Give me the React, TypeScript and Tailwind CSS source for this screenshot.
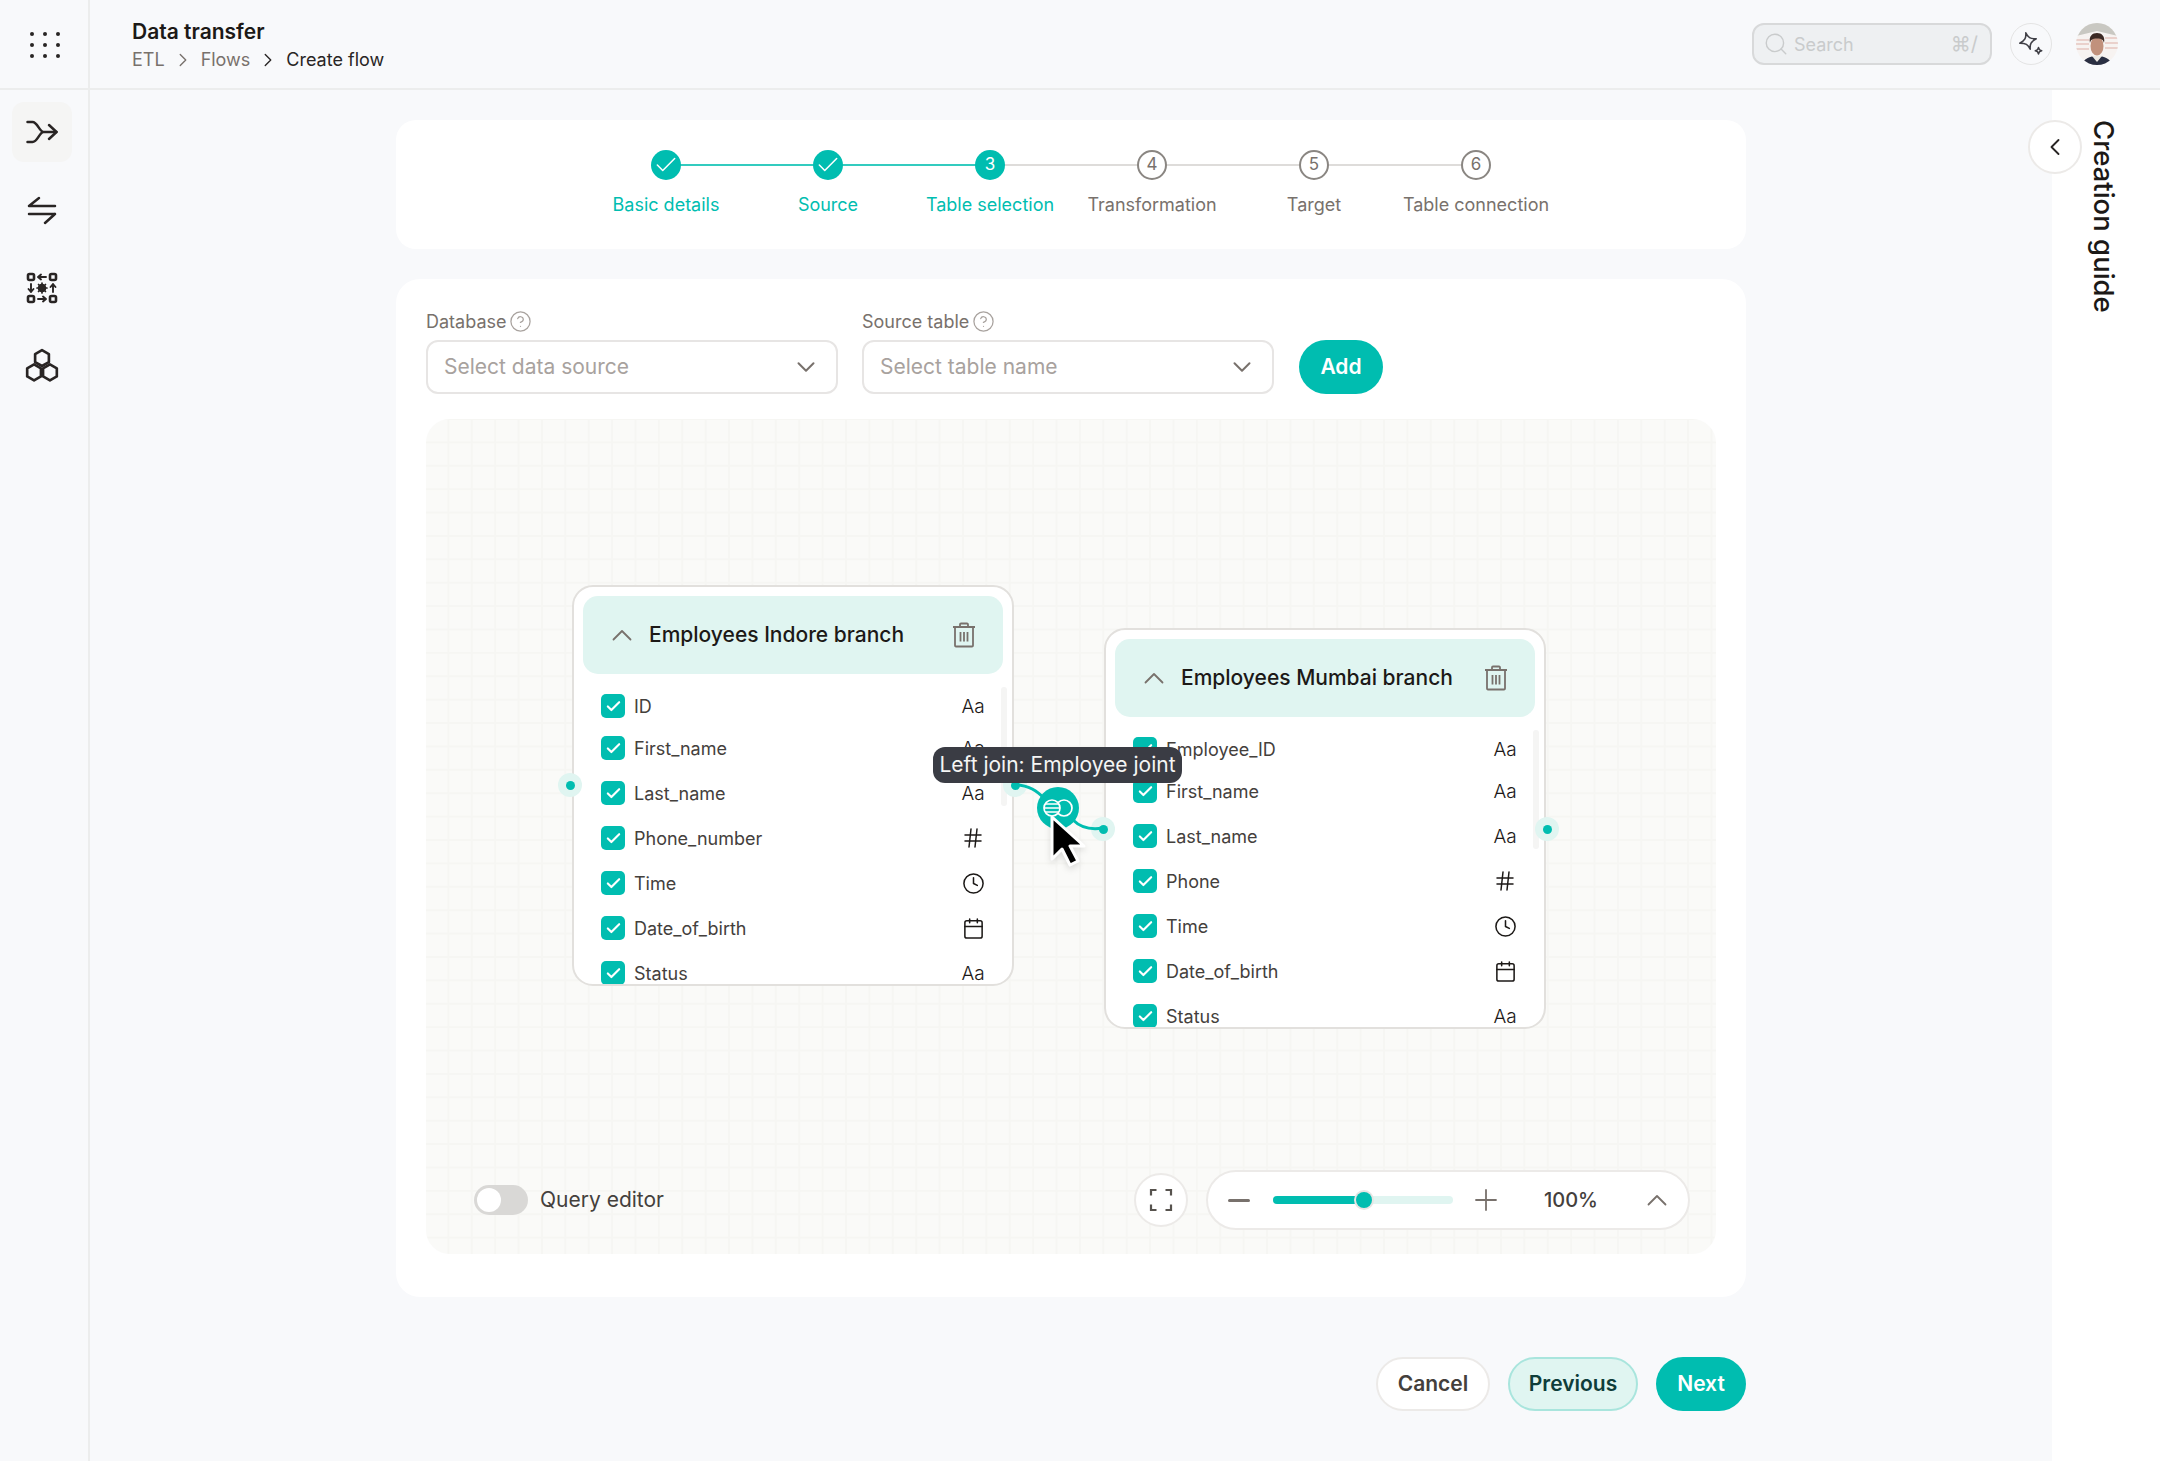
import { Check, ChevronDown, ChevronLeft, ChevronRight, Clock, Calendar, Hash, Search, CircleHelp } from "lucide-react";
import { ReactNode } from "react";

const steps = [
  { label: "Basic details", state: "done" },
  { label: "Source", state: "done" },
  { label: "Table selection", state: "current" },
  { label: "Transformation", state: "todo" },
  { label: "Target", state: "todo" },
  { label: "Table connection", state: "todo" },
];

type ColType = "text" | "num" | "time" | "date";

const indore: [string, ColType][] = [
  ["ID", "text"],
  ["First_name", "text"],
  ["Last_name", "text"],
  ["Phone_number", "num"],
  ["Time", "time"],
  ["Date_of_birth", "date"],
  ["Status", "text"],
];

const mumbai: [string, ColType][] = [
  ["Employee_ID", "text"],
  ["First_name", "text"],
  ["Last_name", "text"],
  ["Phone", "num"],
  ["Time", "time"],
  ["Date_of_birth", "date"],
  ["Status", "text"],
];

const TypeIcon = ({ type }: { type: ColType }) => {
  if (type === "num") return <Hash size={24} strokeWidth={1.5} className="shrink-0 text-[#1c1917]" />;
  if (type === "time") return <Clock size={23} strokeWidth={1.6} className="shrink-0 text-[#1c1917]" />;
  if (type === "date") return <Calendar size={23} strokeWidth={1.6} className="shrink-0 text-[#1c1917]" />;
  return <span className="text-[19px] font-light leading-none text-[#1c1917]">Aa</span>;
};

const Caret = () => (
  <svg width="20" height="12" viewBox="0 0 20 12" fill="none" stroke="#78716c" strokeWidth="1.8" strokeLinecap="round" strokeLinejoin="round" className="shrink-0">
    <path d="M1.500 10.500L10 2l8.500 8.500" />
  </svg>
);

const TrashIcon = () => (
  <svg width="24" height="26" viewBox="0 0 24 26" fill="none" stroke="#78716c" strokeWidth="1.800" strokeLinejoin="round" className="shrink-0">
    <path d="M1 5h22M8 5V2.500c0-.6.400-1 1-1h6c.6 0 1 .4 1 1V5" />
    <path d="M3 5v18.500c0 .6.400 1 1 1h16c.6 0 1-.4 1-1V5" />
    <path d="M8.500 10v9.500M12 10v9.500M15.500 10v9.500" />
  </svg>
);

const Port = ({ className }: { className: string }) => (
  <div className={`absolute flex h-6 w-6 items-center justify-center rounded-full bg-[#e0f5f1] ${className}`}>
    <div className="h-[9px] w-[9px] rounded-full bg-[#00bdb0]" />
  </div>
);

const TableCard = ({ title, rows, className }: { title: string; rows: [string, ColType][]; className: string }) => (
  <div className={`absolute h-[401px] w-[442px] ${className}`}>
    <div className="h-full w-full overflow-hidden rounded-[21px] border-2 border-[#e2e0dd] bg-white p-[9px]">
      <div className="flex h-[78px] items-center rounded-[15px] bg-[#e0f5f1] pl-[29px] pr-[27px]">
        <Caret />
        <span className="ml-[17px] flex-1 text-[21px] font-medium text-[#1c1917]">{title}</span>
        <TrashIcon />
      </div>
      <div className="relative pl-[18px] pr-[17px] pt-[20px]">
        <div className="absolute right-[-4px] top-[13px] h-[119px] w-[6px] rounded-full bg-[#f5f5f4]" />
        <div className="flex flex-col">
          {rows.map(([name, type], i) => (
            <div key={name} className={`flex h-[24px] items-center ${i === 0 ? "" : i === 1 ? "mt-[18px]" : "mt-[21px]"}`}>
              <div className="flex h-6 w-6 items-center justify-center rounded-[5px] bg-[#00bdb0]">
                <Check size={17} strokeWidth={3} className="text-white" />
              </div>
              <span className="ml-[9px] flex-1 text-[18px] text-[#44403c]">{name}</span>
              <div className="flex w-[26px] justify-center">
                <TypeIcon type={type} />
              </div>
            </div>
          ))}
        </div>
      </div>
    </div>
  </div>
);

const RoundBtn = ({ children, className }: { children: ReactNode; className: string }) => (
  <div className={`flex items-center justify-center rounded-full border-2 border-[#eceae8] bg-white ${className}`}>{children}</div>
);

const SelectBox = ({ label, placeholder }: { label: string; placeholder: string }) => (
  <div className="w-[412px]">
    <div className="flex h-[24px] items-center gap-[3px] text-[18px] text-[#78716c]">
      {label}
      <CircleHelp size={23} strokeWidth={1.3} className="text-[#a8a29e]" />
    </div>
    <div className="mt-[7px] flex h-[54px] items-center justify-between rounded-[12px] border-2 border-[#e7e5e4] bg-white pl-[16px] pr-[15px]">
      <span className="text-[21px] text-[#a8a29e]">{placeholder}</span>
      <ChevronDown size={30} strokeWidth={1.6} className="text-[#78716c]" />
    </div>
  </div>
);

export default function App() {
  return (
    <div className="flex h-[1461px] w-[2160px] flex-col overflow-hidden bg-[#f8f9fb] font-['Inter',sans-serif]">
      {/* top bar */}
      <header className="flex h-[90px] items-center border-b-2 border-[#eceded]">
        <div className="flex h-full w-[90px] items-center justify-center border-r-2 border-[#eceded]">
          <div className="grid grid-cols-3 gap-x-[9px] gap-y-[7px] pl-[1px] pt-[1px]">
            {Array.from({ length: 9 }).map((_, i) => (
              <div key={i} className="h-[4px] w-[4px] rounded-full bg-[#292524]" />
            ))}
          </div>
        </div>
        <div className="ml-[42px] flex-1">
          <div className="mt-[1px] text-[21px] font-semibold leading-[28px] text-[#1c1917]">Data transfer</div>
          <div className="mt-[2px] flex items-center text-[18px] leading-[24px] text-[#78716c]">
            ETL
            <ChevronRight size={22} strokeWidth={1.5} className="mx-[7px]" />
            Flows
            <ChevronRight size={22} strokeWidth={1.5} className="mx-[7px] text-[#292524]" />
            <span className="text-[#292524]">Create flow</span>
          </div>
        </div>
        <div className="flex h-[42px] w-[240px] items-center rounded-[12px] border-2 border-[#d8d9da] bg-[#eef0f2] pl-[9px] pr-[12px]">
          <Search size={26} strokeWidth={1.3} className="text-[#c9cbcc]" />
          <span className="ml-[5px] flex-1 text-[18px] text-[#c9cbcc]">Search</span>
          <span className="text-[20px] text-[#c9cbcc]">⌘/</span>
        </div>
        <div className="ml-[18px] flex h-[42px] w-[42px] items-center justify-center rounded-full border border-[#e4e4e4] bg-[#f8f9fb]">
          <svg width="28" height="28" viewBox="0 0 28 28" fill="none" stroke="#3f3f46" strokeWidth="1.600" strokeLinejoin="round">
            <g transform="rotate(-15 11 11)">
              <path d="M11 2.500c.9 5.200 2.700 7 8.500 8.500-5.800 1.500-7.600 3.300-8.500 8.500-.9-5.200-2.700-7-8.500-8.500C8.300 9.500 10.100 7.700 11 2.500z" />
            </g>
            <path d="M21.500 17.500c.3 2 1.100 2.800 3.200 3.200-2.100.4-2.900 1.200-3.200 3.200-.3-2-1.100-2.800-3.200-3.200 2.100-.4 2.900-1.200 3.200-3.200z" />
          </svg>
        </div>
        <div className="ml-[24px] mr-[42px] h-[42px] w-[42px] overflow-hidden rounded-full">
          {/* avatar photo, painted roughly */}
          <svg width="42" height="42" viewBox="0 0 42 42">
            <rect width="42" height="42" fill="#f7f3f1" />
            <path d="M0 13L21 8l21 5V0H0z" fill="#c9c8c2" />
            <path d="M0 17h13M0 21h13M0 26h13M29 15h13M29 20h13M29 25h13" stroke="#e6c6c0" strokeWidth="1.600" />
            <path d="M6 42c1-6 8-9 15-9s14 3 15 9z" fill="#2a2f42" />
            <path d="M16 33l5 6 5-6z" fill="#ece8e2" />
            <ellipse cx="21" cy="23" rx="6.500" ry="9.500" fill="#c1917c" />
            <path d="M14 20c-1.500-7 2.500-10 7-10s8.500 3 7 10c-.8-3-1.800-4.500-7-4.500s-6.200 1.500-7 4.500z" fill="#3d2a24" />
          </svg>
        </div>
      </header>

      <div className="flex flex-1">
        {/* left rail */}
        <aside className="flex w-[90px] flex-col items-center border-r-2 border-[#eceded] pr-[4px] pt-[12px]">
          <div className="flex h-[60px] w-[60px] items-center justify-center rounded-[12px] bg-[#f5f5f4]">
            <svg width="34" height="26" viewBox="0 0 34 26" fill="none" stroke="#292524" strokeWidth="2.500" strokeLinecap="round" strokeLinejoin="round">
              <path d="M2.500 3h5c5 0 7 10 11 10h13M2.500 23h5c5 0 7-10 11-10" />
              <path d="M24 6l7.500 7-7.500 7" />
            </svg>
          </div>
          <div className="mt-[24px] flex h-[48px] items-center">
            <svg width="30" height="30" viewBox="0 0 30 30" fill="none" stroke="#292524" strokeWidth="2.500" strokeLinecap="round" strokeLinejoin="round">
              <path d="M2 11h26M2 11L12 3M2 19h26M28 19l-10 9" />
            </svg>
          </div>
          <div className="mt-[30px] flex h-[48px] items-center">
            <svg width="32" height="32" viewBox="0 0 32 32" fill="none" stroke="#292524" strokeWidth="2.600" strokeLinecap="round" strokeLinejoin="round">
              <rect x="2" y="2" width="6" height="6" rx="1.500" />
              <rect x="24" y="2" width="6" height="6" rx="1.500" />
              <rect x="2" y="24" width="6" height="6" rx="1.500" />
              <rect x="24" y="24" width="6" height="6" rx="1.500" />
              <path d="M13 5h7M12 5l3-2.500M12 5l3 2.500M12 27h7M20 27l-3-2.500M20 27l-3 2.500M5 12v7M5 20l-2.500-3M5 20l2.500-3M27 13v7M27 12l-2.500 3M27 12l2.500 3" strokeWidth="1.900" />
              <circle cx="16" cy="16" r="3" fill="#292524" />
              <path d="M16 11v10M11 16h10M12.500 12.500l7 7M19.500 12.500l-7 7" strokeWidth="1.700" />
            </svg>
          </div>
          <div className="mt-[30px] flex h-[48px] items-center">
            <svg width="36" height="36" viewBox="0 0 34 34" fill="none" stroke="#292524" strokeWidth="2.500" strokeLinejoin="round">
              <path d="M17 2l6.500 3.700v7.600L17 17l-6.500-3.700V5.700z" />
              <path d="M9.500 15.500l6.500 3.700v7.600l-6.500 3.700L3 26.800v-7.600z" />
              <path d="M24.500 15.500l6.500 3.700v7.600l-6.500 3.700-6.500-3.700v-7.600z" />
            </svg>
          </div>
        </aside>

        {/* main column */}
        <main className="flex flex-1 flex-col items-center pt-[30px]">
          <section className="flex h-[129px] w-[1350px] rounded-[20px] bg-white pl-[189px] pt-[30px]">
            {steps.map((step, i) => (
              <div key={step.label} className="relative flex w-[162px] flex-col items-center">
                {i < steps.length - 1 && (
                  <div className={`absolute left-[81px] top-[14px] h-[2px] w-[162px] ${i < 2 ? "bg-[#33cbbf]" : "bg-[#dedcda]"}`} />
                )}
                {step.state === "todo" ? (
                  <div className="relative flex h-[30px] w-[30px] items-center justify-center rounded-full border-2 border-[#8a8682] bg-white text-[17px] text-[#78716c]">
                    {i + 1}
                  </div>
                ) : (
                  <div className="relative flex h-[30px] w-[30px] items-center justify-center rounded-full bg-[#00bdb0] text-[17px] text-white">
                    {step.state === "done" ? <Check size={26} strokeWidth={1.4} className="shrink-0" /> : i + 1}
                  </div>
                )}
                <div className={`mt-[14px] whitespace-nowrap text-[18px] leading-[22px] ${step.state === "todo" ? "text-[#78716c]" : "text-[#00bdb0]"}`}>
                  {step.label}
                </div>
              </div>
            ))}
          </section>

          <section className="mt-[30px] flex h-[1018px] w-[1350px] flex-col rounded-[24px] bg-white px-[30px] pt-[30px]">
            <div className="flex items-end gap-[24px]">
              <SelectBox label="Database" placeholder="Select data source" />
              <SelectBox label="Source table" placeholder="Select table name" />
              <div className="ml-[1px] flex h-[54px] w-[84px] items-center justify-center rounded-full bg-[#00bdb0] text-[21px] font-semibold text-white">Add</div>
            </div>

            {/* canvas */}
            <div className="relative mt-[25px] flex h-[835px] items-end rounded-[24px] bg-[#fafaf8] bg-[linear-gradient(#f6f6f3_2px,transparent_2px),linear-gradient(90deg,#f6f6f3_2px,transparent_2px)] bg-[size:23.4px_23.4px] bg-[position:-2px_-1px] pb-[24px] pl-[48px] pr-[26px]">
              <div className="flex h-[60px] w-full items-center">
                <div className="flex h-[30px] w-[54px] items-center rounded-full bg-[#d9d8d6] pl-[3px]">
                  <div className="h-[24px] w-[24px] rounded-full bg-white" />
                </div>
                <span className="ml-[12px] flex-1 text-[21px] text-[#44403c]">Query editor</span>
                <RoundBtn className="h-[54px] w-[54px]">
                  <svg width="24" height="24" viewBox="0 0 24 24" fill="none" stroke="#57534e" strokeWidth="2.200">
                    <path d="M2 7.500V2h5.500M16.500 2H22v5.500M22 16.500V22h-5.500M7.500 22H2v-5.500" />
                  </svg>
                </RoundBtn>
                <RoundBtn className="ml-[18px] h-[60px] w-[484px] !justify-start pl-[20px]">
                  <div className="h-[3px] w-[22px] rounded-full bg-[#78716c]" />
                  <div className="relative ml-[23px] h-[8px] w-[180px] rounded-full bg-[#e0f5f1]">
                    <div className="h-full w-[91px] rounded-full bg-[#00bdb0]" />
                    <div className="absolute left-[83px] top-[-4px] h-4 w-4 rounded-full bg-[#00bdb0] ring-2 ring-[#e7e5e4]" />
                  </div>
                  <svg width="22" height="22" viewBox="0 0 22 22" fill="none" stroke="#78716c" strokeWidth="1.800" strokeLinecap="round" className="ml-[22px] shrink-0">
                    <path d="M11 1v20M1 11h20" />
                  </svg>
                  <span className="ml-[14px] w-[120px] text-center text-[20px] font-medium text-[#44403c]">100%</span>
                  <div className="ml-[16px]">
                    <Caret />
                  </div>
                </RoundBtn>
              </div>

              <TableCard title="Employees Indore branch" rows={indore} className="left-[146px] top-[166px]" />
              <TableCard title="Employees Mumbai branch" rows={mumbai} className="left-[678px] top-[209px]" />

              <Port className="left-[132px] top-[354px]" />
              <Port className="left-[577px] top-[354px]" />
              <Port className="left-[665px] top-[398px]" />
              <Port className="left-[1109px] top-[398px]" />

              {/* join link, node and cursor */}
              <svg className="absolute left-[589px] top-[361px]" width="92" height="54" viewBox="0 0 92 54" fill="none" stroke="#00bdb0" strokeWidth="3" strokeLinecap="round">
                <path d="M0 5c14 0 22 6 30 14M58 40c8 8 18 10 30 8" />
              </svg>
              <div className="absolute left-[611px] top-[368px] flex h-[42px] w-[42px] items-center justify-center rounded-full bg-[#00bdb0]">
                <svg width="32" height="22" viewBox="0 0 32 22" fill="none" stroke="#fff" strokeWidth="1.700">
                  <circle cx="22" cy="11" r="8" />
                  <circle cx="10" cy="11" r="8" fill="#00bdb0" />
                  <path d="M3 7h14M2 11h16M3 15h14" />
                </svg>
              </div>
              <div className="absolute left-[507px] top-[328px] flex h-[36px] w-[249px] items-center justify-center whitespace-nowrap rounded-[12px] bg-[#3a3c44] text-[21px] text-[#f5f5f4]">
                Left join: Employee joint
              </div>
              <svg className="absolute left-[623px] top-[395px] drop-shadow-md" width="40" height="54" viewBox="0 0 40 54">
                <path d="M3 3v42l10-10 8 16 8-4-8-15h14z" fill="#000" stroke="#fff" strokeWidth="3" strokeLinejoin="round" />
              </svg>
            </div>
          </section>

          <div className="mt-[60px] flex h-[54px] w-[1350px] items-center justify-end gap-[18px] text-[21px] font-semibold">
            <div className="flex h-[54px] w-[114px] items-center justify-center rounded-full border-2 border-[#eceae8] bg-white text-[#44403c]">Cancel</div>
            <div className="flex h-[54px] w-[130px] items-center justify-center rounded-full border-2 border-[#a9e5dd] bg-[#e0f5f1] text-[#0f3d3a]">Previous</div>
            <div className="flex h-[54px] w-[90px] items-center justify-center rounded-full bg-[#00bdb0] text-white">Next</div>
          </div>
        </main>

        {/* guide panel */}
        <aside className="relative w-[108px] bg-white">
          <RoundBtn className="absolute left-[-24px] top-[30px] h-[54px] w-[54px]">
            <ChevronLeft size={28} strokeWidth={1.6} className="text-[#292524]" />
          </RoundBtn>
          <div className="absolute left-[36px] top-[30px] text-[27.5px] font-medium leading-[32px] text-[#1c1917] [writing-mode:vertical-rl]">Creation guide</div>
        </aside>
      </div>
    </div>
  );
}
